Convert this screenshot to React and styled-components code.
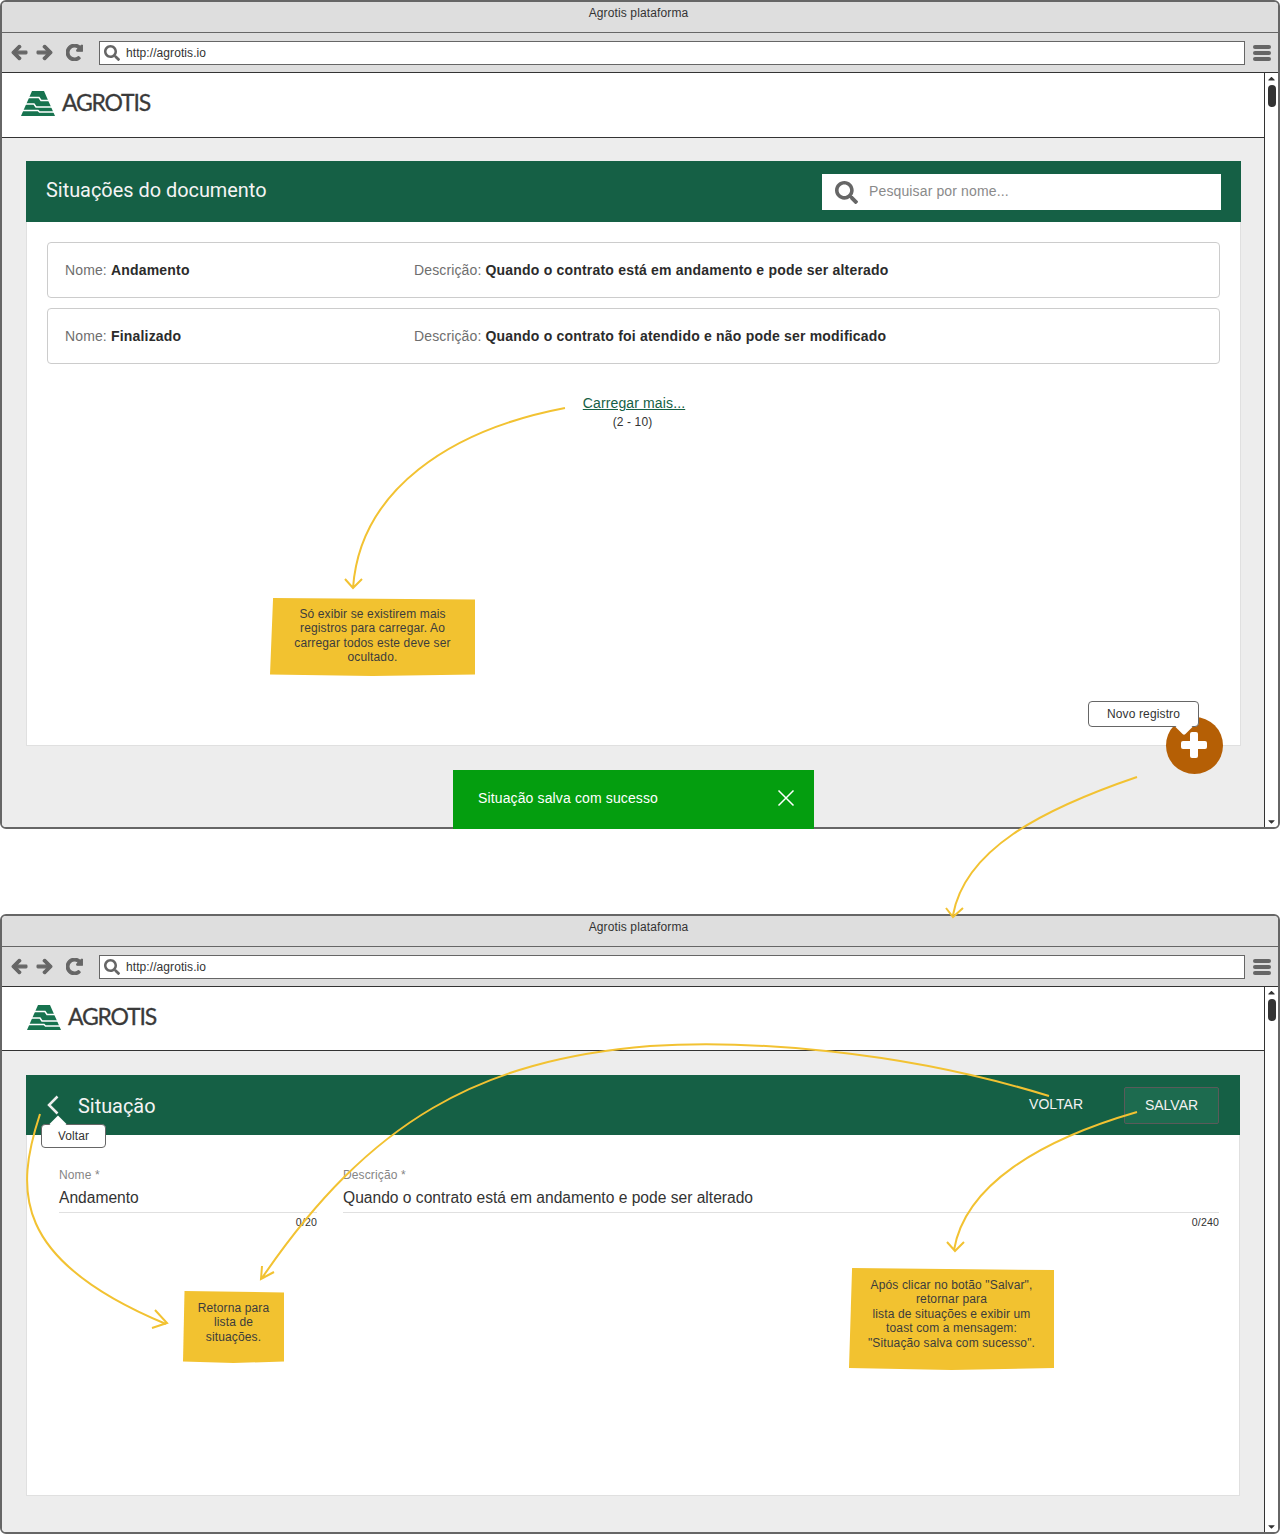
import React from "react";
import styled, { createGlobalStyle } from "styled-components";
import {
  FaArrowLeft,
  FaArrowRight,
  FaRedoAlt,
  FaSearch,
  FaCaretUp,
  FaCaretDown,
} from "react-icons/fa";

const GREEN = "#156045";
const ARROW = "#f2c232";

const GlobalStyle = createGlobalStyle`
  html, body { margin: 0; padding: 0; background: #fff; }
  body {
    font-family: "Liberation Sans", Arial, sans-serif;
    color: #333;
    letter-spacing: 0.13px;
  }
  * { box-sizing: border-box; }
`;

const Page = styled.div`
  position: relative;
  width: 1280px;
  height: 1534px;
  display: flex;
  flex-direction: column;
  gap: 85px;
  overflow: hidden;
`;

const Browser = styled.section`
  height: ${(p) => p.$height}px;
  border: 2px solid #666;
  border-radius: 6px;
  display: flex;
  flex-direction: column;
  overflow: hidden;
  background: #fff;
  flex: none;
`;

const TitleBar = styled.div`
  height: 31px;
  background: #dedede;
  border-bottom: 1px solid #666;
  text-align: center;
  font-size: 12px;
  line-height: 22px;
  color: #333;
  flex: none;
  padding-right: 3px;
`;

const ToolBar = styled.div`
  height: 40px;
  background: #dedede;
  border-bottom: 1px solid #333;
  display: flex;
  align-items: center;
  padding: 0 7px 0 9px;
  color: #666;
  flex: none;
`;

const NavButton = styled.span`
  display: flex;
  width: ${(p) => p.$w}px;
  font-size: 17px;
  svg {
    stroke: currentColor;
    stroke-width: 36;
  }
`;

const AddressBar = styled.div`
  flex: 1;
  height: 24px;
  margin: 0 8px 0 11px;
  background: #fff;
  border: 1px solid #666;
  display: flex;
  align-items: center;
  gap: 6px;
  padding-left: 4px;
  font-size: 12px;
  letter-spacing: 0.08px;
  color: #333;
`;

const MenuIcon = styled.span`
  width: 18px;
  display: flex;
  flex-direction: column;
  gap: 2px;
  i {
    height: 4px;
    border-radius: 2px;
    background: #666;
  }
`;

const Viewport = styled.div`
  flex: 1;
  display: flex;
  min-height: 0;
`;

const Content = styled.div`
  flex: 1;
  display: flex;
  flex-direction: column;
  background: #ededed;
  min-width: 0;
`;

const Scrollbar = styled.div`
  width: 14px;
  border-left: 1px solid #333;
  background: #fff;
  display: flex;
  flex-direction: column;
  align-items: center;
  justify-content: space-between;
  flex: none;
  color: #333;
  font-size: 11px;
  position: relative;
  line-height: 0;
`;

const ScrollThumb = styled.div`
  position: absolute;
  top: 12px;
  left: 3px;
  width: 8px;
  height: 22px;
  border-radius: 4px;
  background: #333;
`;

const AppHeader = styled.header`
  height: ${(p) => p.$height}px;
  background: #fff;
  border-bottom: 1px solid #333;
  display: flex;
  align-items: center;
  padding: 0 0 3px ${(p) => p.$left}px;
  flex: none;
`;

const Logo = styled.div`
  display: flex;
  align-items: center;
  gap: 7px;
`;

const LogoText = styled.span`
  font-family: Lato, "Liberation Sans", sans-serif;
  font-size: 23px;
  line-height: 26px;
  font-weight: 400;
  letter-spacing: -1.2px;
  color: #3a3a3a;
  -webkit-text-stroke: 0.3px #3a3a3a;
  margin-top: -3px;
`;

const Main = styled.main`
  flex: 1;
  display: flex;
  flex-direction: column;
  padding: ${(p) => p.$top}px ${(p) => p.$right}px 0 24px;
  min-height: 0;
`;

const Panel = styled.div`
  height: ${(p) => p.$height}px;
  display: flex;
  flex-direction: column;
  background: #fff;
  border: 1px solid #e0e0e0;
  border-top: 0;
  flex: none;
`;

const PanelBar = styled.div`
  height: ${(p) => p.$height}px;
  margin: 0 -1px;
  background: ${GREEN};
  display: flex;
  align-items: center;
  flex: none;
  color: #fff;
`;

const PanelTitle = styled.h1`
  margin: 0;
  font-family: Roboto, sans-serif;
  font-weight: 400;
  font-size: 19.9px;
  letter-spacing: 0;
  color: #f4f4f4;
  flex: 1;
  padding-top: 2px;
`;

const ListTitle = styled(PanelTitle)`
  padding: 0 0 3px 20px;
`;

const SearchBox = styled.div`
  width: 399px;
  height: 36px;
  margin: 1px 20px 0 0;
  background: #fff;
  display: flex;
  align-items: center;
  gap: 11px;
  padding: 0 0 2px 13px;
  font-size: 14px;
  color: #8a8a8a;
  svg {
    color: #666;
    font-size: 23px;
    margin-top: 2px;
  }
`;

const RowList = styled.div`
  display: flex;
  flex-direction: column;
  gap: 10px;
  padding: 20px 20px 0;
`;

const Row = styled.div`
  height: 56px;
  border: 1px solid #ccc;
  border-radius: 4px;
  display: grid;
  grid-template-columns: 349px 1fr;
  align-items: center;
  padding-left: 17px;
  font-size: 14px;
`;

const Field = styled.div`
  color: #6e6e6e;
  b {
    font-weight: 700;
    letter-spacing: 0.2px;
    color: #2b2b2b;
  }
`;

const LoadMore = styled.div`
  margin-top: 30px;
  display: flex;
  flex-direction: column;
  align-items: center;
  padding-right: 2px;
`;

const LoadLink = styled.a`
  font-size: 14px;
  line-height: 19px;
  color: ${GREEN};
  text-decoration: underline;
  padding-left: 3px;
`;

const Range = styled.span`
  font-size: 12px;
  line-height: 18px;
  color: #333;
`;

const Toast = styled.div`
  position: absolute;
  left: 453px;
  top: 770px;
  width: 361px;
  height: 59px;
  background: #049e0f;
  color: #fff;
  font-size: 14px;
  display: flex;
  align-items: center;
  justify-content: space-between;
  padding: 0 19px 3px 25px;
`;

const Fab = styled.div`
  position: absolute;
  left: 1166px;
  top: 717px;
  width: 57px;
  height: 57px;
  border-radius: 50%;
  background: #b55f05;
  display: flex;
  align-items: center;
  justify-content: center;
  padding: 0 2px 2px 0;
`;

const Tip = styled.div`
  position: absolute;
  left: ${(p) => p.$x}px;
  top: ${(p) => p.$y}px;
  width: ${(p) => p.$w}px;
  height: ${(p) => p.$h}px;
  background: #fff;
  border: 1px solid #666;
  border-radius: 4px;
  font-size: 12px;
  color: #333;
  display: flex;
  align-items: center;
  justify-content: center;
  &::after {
    content: "";
    position: absolute;
    left: ${(p) => p.$tail}px;
    ${(p) => (p.$up ? "top: -7px;" : "bottom: -7px;")}
    width: 12px;
    height: 12px;
    background: #fff;
    transform: rotate(45deg);
    ${(p) => (p.$up ? "" : "border-radius: 0 0 2px 0;")}
  }
`;

const BackButton = styled.span`
  width: 52px;
  display: flex;
  justify-content: flex-end;
  padding-right: 18px;
  color: #eee;
`;

const TextButton = styled.span`
  font-size: 14px;
  letter-spacing: 0;
  color: #f2f2f2;
  margin: -2px 41px 0 0;
`;

const SaveButton = styled.span`
  width: 95px;
  height: 37px;
  margin-right: 21px;
  background: #1d6b4f;
  border: 1px solid #5a5a5a;
  border-radius: 2px;
  display: flex;
  align-items: center;
  justify-content: center;
  font-size: 14px;
  letter-spacing: 0;
  color: #f2f2f2;
`;

const FormGrid = styled.div`
  display: grid;
  grid-template-columns: 258px 876px;
  column-gap: 26px;
  padding: 33px 0 0 32px;
`;

const FormField = styled.div`
  display: flex;
  flex-direction: column;
`;

const FieldLabel = styled.label`
  font-size: 12px;
  line-height: 14px;
  color: #858585;
`;

const FieldValue = styled.div`
  height: 31px;
  padding-top: 7px;
  font-size: 15.6px;
  line-height: 18px;
  letter-spacing: 0;
  color: #333;
  border-bottom: 1px solid #e0e0e0;
`;

const Counter = styled.div`
  margin-top: 3px;
  font-size: 10.6px;
  line-height: 12px;
  color: #333;
  text-align: right;
`;

const Sticky = styled.div`
  position: absolute;
  left: ${(p) => p.$x}px;
  top: ${(p) => p.$y}px;
  width: ${(p) => p.$w}px;
  height: ${(p) => p.$h}px;
  background: #f2c230;
  clip-path: polygon(1.5% 0, 100% 2%, 100% 70%, 100% 98%, 50% 100%, 25% 99%, 0 98%);
  display: flex;
  align-items: center;
  justify-content: center;
  text-align: center;
  font-size: 12px;
  line-height: 14.4px;
  color: #3c3c3c;
  padding: 0 ${(p) => p.$pad}px ${(p) => p.$bottom}px;
`;

const Overlay = styled.svg`
  position: absolute;
  left: 0;
  top: 0;
  width: 1280px;
  height: 1534px;
  pointer-events: none;
  fill: none;
  stroke: ${ARROW};
  stroke-width: 2;
`;

const LogoMark = () => (
  <svg width="34" height="25" viewBox="0 0 34 25">
    <path fill="#17734f" d="M11 0h12l11 25H0z" />
    <path
      fill="none"
      stroke="#fff"
      strokeWidth="1.500"
      d="M5 6.500H18l2 3H30M3 13H13l2 3H32M0 19.500H17l1.500 1.500H34"
    />
  </svg>
);

const Chrome = ({ children }) => (
  <>
    <TitleBar>Agrotis plataforma</TitleBar>
    <ToolBar>
      <NavButton $w={25}><FaArrowLeft /></NavButton>
      <NavButton $w={30}><FaArrowRight /></NavButton>
      <NavButton $w={22}><FaRedoAlt /></NavButton>
      <AddressBar>
        <FaSearch size={16} color="#666" />
        http://agrotis.io
      </AddressBar>
      <MenuIcon><i /><i /><i /></MenuIcon>
    </ToolBar>
    <Viewport>
      <Content>{children}</Content>
      <Scrollbar>
        <FaCaretUp />
        <ScrollThumb />
        <FaCaretDown />
      </Scrollbar>
    </Viewport>
  </>
);

const rows = [
  { nome: "Andamento", descricao: "Quando o contrato está em andamento e pode ser alterado" },
  { nome: "Finalizado", descricao: "Quando o contrato foi atendido e não pode ser modificado" },
];

export default function App() {
  return (
    <Page>
      <GlobalStyle />
      <Browser $height={829}>
        <Chrome>
          <AppHeader $height={65} $left={19}>
            <Logo>
              <LogoMark />
              <LogoText>AGROTIS</LogoText>
            </Logo>
          </AppHeader>
          <Main $top={23} $right={23}>
            <Panel $height={585}>
              <PanelBar $height={61}>
                <ListTitle>Situações do documento</ListTitle>
                <SearchBox>
                  <FaSearch />
                  Pesquisar por nome...
                </SearchBox>
              </PanelBar>
              <RowList>
                {rows.map((r) => (
                  <Row key={r.nome}>
                    <Field>Nome: <b>{r.nome}</b></Field>
                    <Field>Descrição: <b>{r.descricao}</b></Field>
                  </Row>
                ))}
              </RowList>
              <LoadMore>
                <LoadLink>Carregar mais...</LoadLink>
                <Range>(2 - 10)</Range>
              </LoadMore>
            </Panel>
          </Main>
        </Chrome>
      </Browser>

      <Browser $height={620}>
        <Chrome>
          <AppHeader $height={64} $left={25}>
            <Logo>
              <LogoMark />
              <LogoText>AGROTIS</LogoText>
            </Logo>
          </AppHeader>
          <Main $top={24} $right={24}>
            <Panel $height={421}>
              <PanelBar $height={60}>
                <BackButton>
                  <svg width="14" height="20" viewBox="0 0 14 20" fill="none" stroke="currentColor" strokeWidth="2.500">
                    <path d="M11.500 1.500L3 10l8.500 8.500" />
                  </svg>
                </BackButton>
                <PanelTitle>Situação</PanelTitle>
                <TextButton>VOLTAR</TextButton>
                <SaveButton>SALVAR</SaveButton>
              </PanelBar>
              <FormGrid>
                <FormField>
                  <FieldLabel>Nome *</FieldLabel>
                  <FieldValue>Andamento</FieldValue>
                  <Counter>0/20</Counter>
                </FormField>
                <FormField>
                  <FieldLabel>Descrição *</FieldLabel>
                  <FieldValue>Quando o contrato está em andamento e pode ser alterado</FieldValue>
                  <Counter>0/240</Counter>
                </FormField>
              </FormGrid>
            </Panel>
          </Main>
        </Chrome>
      </Browser>

      <Toast>
        Situação salva com sucesso
        <svg width="18" height="18" viewBox="0 0 18 18" stroke="#fff" strokeWidth="1.500">
          <path d="M1.500 1.500l15 15M16.500 1.500l-15 15" />
        </svg>
      </Toast>
      <Fab>
        <svg width="26" height="26" viewBox="0 0 26 26" fill="#fff">
          <rect x="9" y="0" width="8" height="26" rx="2" />
          <rect x="0" y="9" width="26" height="8" rx="2" />
        </svg>
      </Fab>
      <Tip $x={1088} $y={701} $w={111} $h={26} $tail={89}>Novo registro</Tip>
      <Tip $x={41} $y={1124} $w={65} $h={24} $tail={10} $up>Voltar</Tip>

      <Sticky $x={270} $y={598} $w={205} $h={78} $pad={20} $bottom={3}>
        Só exibir se existirem mais registros para carregar. Ao carregar todos este deve ser ocultado.
      </Sticky>
      <Sticky $x={183} $y={1291} $w={101} $h={72} $pad={10} $bottom={9}>
        Retorna para lista de situações.
      </Sticky>
      <Sticky $x={849} $y={1268} $w={205} $h={102} $pad={12} $bottom={10}>
        <div>
          Após clicar no botão "Salvar",<br />
          retornar para<br />
          lista de situações e exibir um<br />
          toast com a mensagem:<br />
          "Situação salva com sucesso".
        </div>
      </Sticky>

      <Overlay viewBox="0 0 1280 1534">
        <path d="M565 408C450 430 360 490 353 588M345 579l8 9 9-9" />
        <path d="M1137 777C1040 810 965 850 953 915M946 908l7 9 10-9" />
        <path d="M1049 1096C900 1050 750 1040 650 1046C480 1060 370 1120 262 1278M262 1266l-1 13 13-7" />
        <path d="M1137 1112C1040 1140 965 1185 954 1250M947 1242l8 9 9-9" />
        <path d="M40 1114C15 1190 12 1260 166 1324M155 1310l12 13-15 5" />
      </Overlay>
    </Page>
  );
}
